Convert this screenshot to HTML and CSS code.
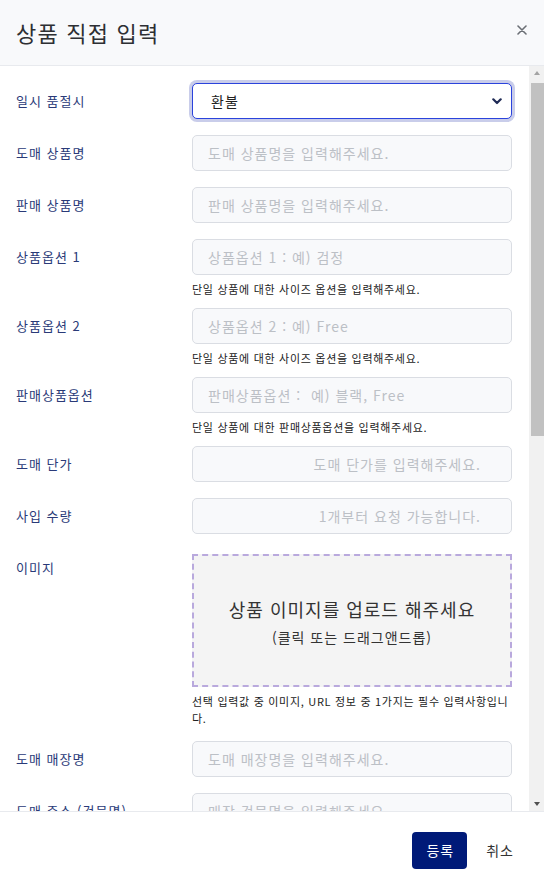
FILE: index.html
```html
<!DOCTYPE html>
<html lang="ko">
<head>
<meta charset="utf-8">
<title>상품 직접 입력</title>
<link rel="stylesheet" href="styles.css">
</head>
<body>
<div class="modal">
  <header class="modal-header">
    <h1 class="modal-title">상품 직접 입력</h1>
    <button class="close-btn" type="button" aria-label="닫기">
      <svg width="10" height="10" viewBox="0 0 10 10"><path d="M1 1L9 9M9 1L1 9" stroke="#6b6f75" stroke-width="1.6" stroke-linecap="round"/></svg>
    </button>
  </header>
  <div class="body-wrap">
    <div class="modal-body">
      <div class="row">
        <label class="label">일시 품절시</label>
        <div class="field">
          <div class="select-wrap">
            <select class="select"><option>환불</option></select>
            <svg class="chev" width="10" height="7" viewBox="0 0 10 7"><path d="M1.3 1.3L5 5L8.7 1.3" fill="none" stroke="#1f2a55" stroke-width="2.2" stroke-linecap="round" stroke-linejoin="round"/></svg>
          </div>
        </div>
      </div>
      <div class="row">
        <label class="label">도매 상품명</label>
        <div class="field"><input class="input" placeholder="도매 상품명을 입력해주세요."></div>
      </div>
      <div class="row">
        <label class="label">판매 상품명</label>
        <div class="field"><input class="input" placeholder="판매 상품명을 입력해주세요."></div>
      </div>
      <div class="row">
        <label class="label">상품옵션 1</label>
        <div class="field">
          <input class="input" placeholder="상품옵션 1 : 예) 검정">
          <p class="help">단일 상품에 대한 사이즈 옵션을 입력해주세요.</p>
        </div>
      </div>
      <div class="row">
        <label class="label">상품옵션 2</label>
        <div class="field">
          <input class="input" placeholder="상품옵션 2 : 예) Free">
          <p class="help">단일 상품에 대한 사이즈 옵션을 입력해주세요.</p>
        </div>
      </div>
      <div class="row">
        <label class="label">판매상품옵션</label>
        <div class="field">
          <input class="input" placeholder="판매상품옵션 :  예) 블랙, Free">
          <p class="help">단일 상품에 대한 판매상품옵션을 입력해주세요.</p>
        </div>
      </div>
      <div class="row">
        <label class="label">도매 단가</label>
        <div class="field"><input class="input right" placeholder="도매 단가를 입력해주세요."></div>
      </div>
      <div class="row">
        <label class="label">사입 수량</label>
        <div class="field"><input class="input right" placeholder="1개부터 요청 가능합니다."></div>
      </div>
      <div class="row">
        <label class="label">이미지</label>
        <div class="field upload-field">
          <div class="upload">
            <p class="upload-title">상품 이미지를 업로드 해주세요</p>
            <p class="upload-sub">(클릭 또는 드래그앤드롭)</p>
          </div>
          <p class="help">선택 입력값 중 이미지, URL 정보 중 1가지는 필수 입력사항입니다.</p>
        </div>
      </div>
      <div class="row">
        <label class="label">도매 매장명</label>
        <div class="field"><input class="input" placeholder="도매 매장명을 입력해주세요."></div>
      </div>
      <div class="row">
        <label class="label">도매 주소 (건물명)</label>
        <div class="field"><input class="input" placeholder="매장 건물명을 입력해주세요."></div>
      </div>
      <div class="row">
        <label class="label">도매 주소 (층)</label>
        <div class="field"><input class="input" placeholder="매장 층을 입력해주세요."></div>
      </div>
      <div class="row">
        <label class="label">도매 주소 (호수)</label>
        <div class="field"><input class="input" placeholder="매장 호수를 입력해주세요."></div>
      </div>
    </div>
    <div class="scrollbar" aria-hidden="true">
      <div class="sb-btn"><span class="tri-up"></span></div>
      <div class="sb-track"><div class="sb-thumb"></div></div>
      <div class="sb-btn"><span class="tri-down"></span></div>
    </div>
  </div>
  <footer class="modal-footer">
    <button class="btn-primary" type="button">등록</button>
    <button class="btn-text" type="button">취소</button>
  </footer>
</div>
</body>
</html>
```

FILE: styles.css
```css
html, body {
  margin: 0;
  height: 100%;
}
body {
  font-family: "Noto Sans CJK KR", "Noto Sans", sans-serif;
  color: #333;
  background: #fff;
}
.modal {
  display: flex;
  flex-direction: column;
  height: 100vh;
}
.modal-header {
  flex: 0 0 65px;
  background: #f8f9fb;
  border-bottom: 1px solid #e8eaee;
  display: flex;
  align-items: center;
  justify-content: space-between;
  padding: 0 16px;
}
.modal-title {
  margin: 0;
  font-size: 22px;
  font-weight: 400;
  letter-spacing: 1.2px;
  color: #2d2f33;
  padding-bottom: 1px;
}
.close-btn {
  border: 0;
  background: transparent;
  padding: 0;
  margin-right: 1px;
  margin-bottom: 6px;
  width: 10px;
  height: 10px;
  display: flex;
}
.body-wrap {
  flex: 1 1 auto;
  min-height: 0;
  display: flex;
}
.modal-body {
  flex: 1 1 auto;
  min-width: 0;
  overflow: hidden;
  padding: 17px 17px 16px 16px;
}
.scrollbar {
  flex: 0 0 15px;
  display: flex;
  flex-direction: column;
  background: #f1f1f1;
}
.sb-btn {
  flex: 0 0 15px;
  display: flex;
  align-items: center;
  justify-content: center;
}
.tri-up {
  width: 0;
  height: 0;
  border-left: 3.5px solid transparent;
  border-right: 3.5px solid transparent;
  border-bottom: 4px solid #a3a3a3;
  margin-top: -1px;
}
.tri-down {
  width: 0;
  height: 0;
  border-left: 3.5px solid transparent;
  border-right: 3.5px solid transparent;
  border-top: 4px solid #505050;
}
.sb-track {
  flex: 1 1 auto;
}
.sb-thumb {
  margin: 2px 0 0 2px;
  height: 353px;
  background: #c1c1c1;
}
.row {
  display: grid;
  grid-template-columns: 176px 1fr;
  align-items: start;
  margin-bottom: 16px;
}
.label {
  font-size: 13px;
  line-height: 36px;
  letter-spacing: 1px;
  color: #2a3a78;
  white-space: nowrap;
}
.field {
  min-width: 0;
}
.input {
  display: block;
  box-sizing: border-box;
  width: 100%;
  height: 36px;
  margin: 0;
  padding: 0 15px;
  background: #f8f9fb;
  border: 1px solid #dadde3;
  border-radius: 5px;
  font-family: inherit;
  font-size: 14px;
  letter-spacing: 1px;
  color: #333;
  outline: none;
}
.input::placeholder {
  color: #bcc0c6;
}
.input.right {
  text-align: right;
  padding-right: 30px;
}
.select-wrap {
  position: relative;
}
.select {
  display: block;
  box-sizing: border-box;
  width: 100%;
  height: 36px;
  padding: 0 18px;
  background: #fff;
  border: 1px solid #2b43dc;
  border-radius: 5px;
  box-shadow: 0 0 0 3px #c9cdea;
  font-family: inherit;
  font-size: 14px;
  letter-spacing: 1px;
  color: #222;
  appearance: none;
  -webkit-appearance: none;
  outline: none;
}
.chev {
  position: absolute;
  right: 10px;
  top: 15px;
  pointer-events: none;
}
.help {
  margin: 6px 0 -6px;
  font-size: 11px;
  line-height: 17px;
  letter-spacing: 0.7px;
  color: #222;
}
.upload-field {
  padding: 4px 0;
}
.upload {
  box-sizing: border-box;
  height: 133px;
  background: #f4f4f4;
  border: 2px dashed #b9a9dd;
  display: flex;
  flex-direction: column;
  align-items: center;
  justify-content: center;
  padding-top: 2px;
}
.upload-title {
  margin: 0;
  font-size: 18px;
  line-height: 26px;
  letter-spacing: 1px;
  color: #333;
}
.upload-sub {
  margin: 4px 0 0;
  font-size: 14px;
  line-height: 22px;
  letter-spacing: 1px;
  color: #333;
}
.modal-footer {
  flex: 0 0 72px;
  border-top: 1px solid #e8eaee;
  display: flex;
  align-items: center;
  justify-content: flex-end;
  gap: 7px;
  padding: 2px 18px 0 0;
}
.btn-primary {
  height: 37px;
  padding: 0 13px 0 14px;
  border: 0;
  border-radius: 4px;
  background: #001a78;
  color: #fff;
  font-family: inherit;
  font-size: 14px;
  letter-spacing: 1px;
}
.btn-text {
  height: 37px;
  padding: 0 12px;
  border: 0;
  background: transparent;
  color: #333;
  font-family: inherit;
  font-size: 14px;
  letter-spacing: 1px;
}
```
